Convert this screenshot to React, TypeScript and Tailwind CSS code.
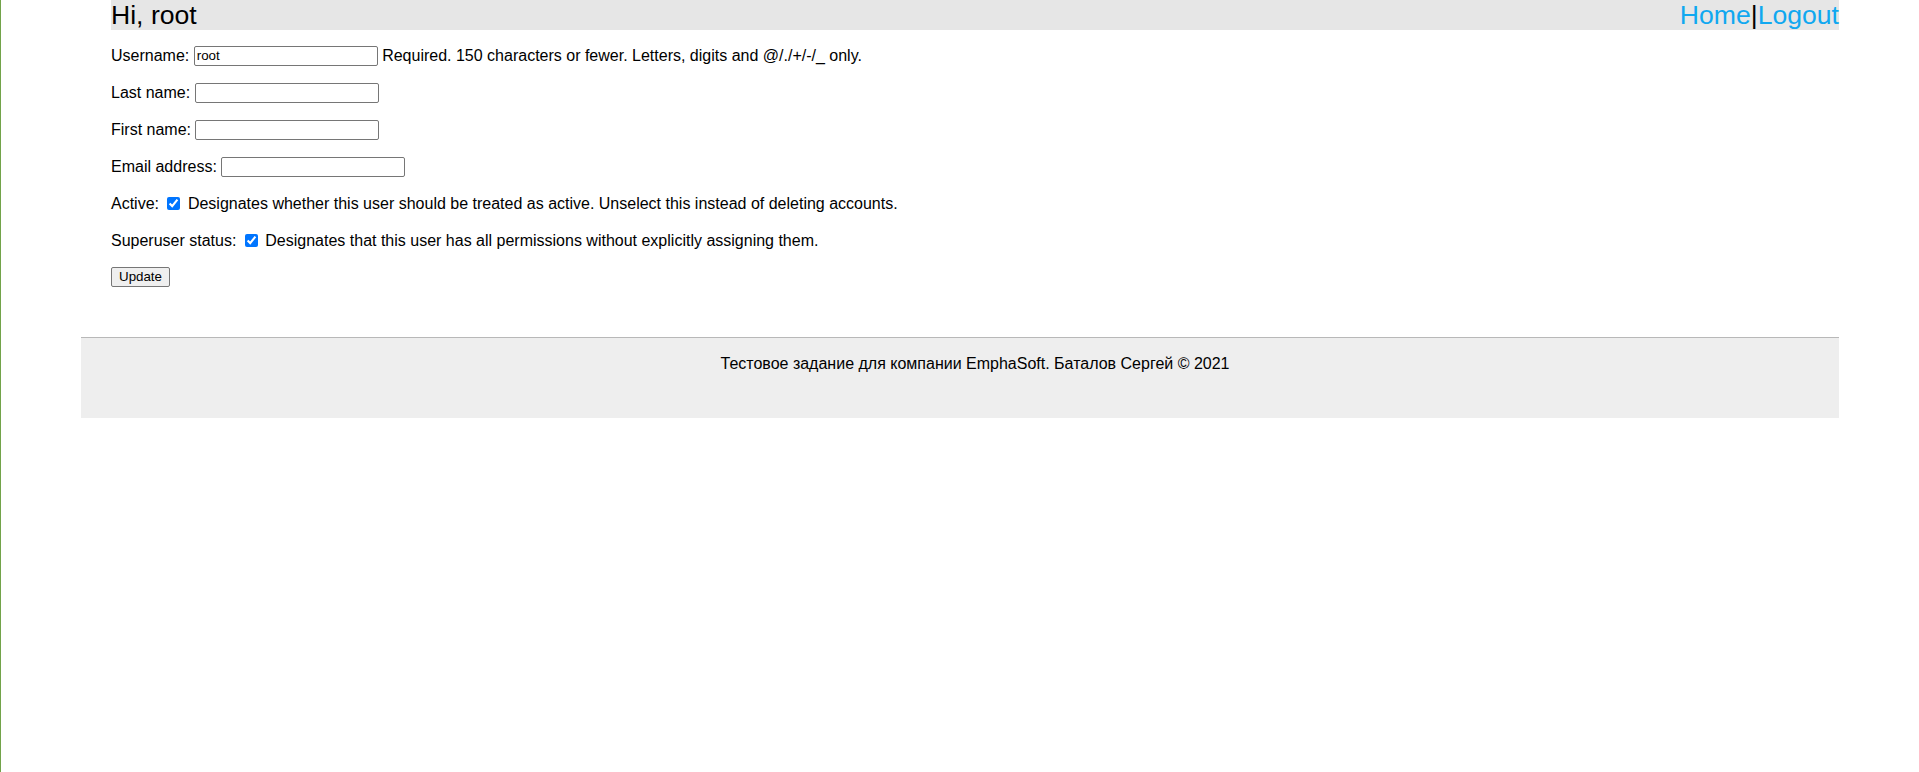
const FIELDS = [
  { label: "Username:", value: "root", help: "Required. 150 characters or fewer. Letters, digits and @/./+/-/_ only." },
  { label: "Last name:", value: "" },
  { label: "First name:", value: "" },
  { label: "Email address:", value: "" },
]

const FLAGS = [
  { label: "Active:", help: "Designates whether this user should be treated as active. Unselect this instead of deleting accounts." },
  { label: "Superuser status:", help: "Designates that this user has all permissions without explicitly assigning them." },
]

export default function App() {
  return (
    <div className="min-h-screen border-l border-[#72a34a] bg-white text-black font-['Liberation_Sans',Arial,sans-serif] text-[16px]">
      <div className="ml-[80px] w-[1758px]">
        <header className="ml-[30px] flex h-[30px] items-center justify-between bg-[#e6e6e6] text-[26.6px] leading-[30px]">
          <span>Hi, root</span>
          <nav className="flex">
            <a href="#" className="text-[#10a8f0]">Home</a>
            <span>|</span>
            <a href="#" className="text-[#10a8f0]">Logout</a>
          </nav>
        </header>

        <form className="ml-[30px] pt-[15px]" onSubmit={(e) => e.preventDefault()}>
          {FIELDS.map((f) => (
            <p key={f.label} className="mb-[16px] flex h-[21px] items-center">
              <label className="whitespace-pre">{f.label + " "}</label>
              <input
                type="text"
                defaultValue={f.value}
                className="h-[20px] w-[184px] rounded-[2px] border border-[#767676] bg-white px-[2px] text-[13.33px] outline-none"
              />
              {f.help && <span className="whitespace-pre">{" " + f.help}</span>}
            </p>
          ))}
          {FLAGS.map((f) => (
            <p key={f.label} className="mb-[16px] flex h-[21px] items-center">
              <label className="whitespace-pre">{f.label + " "}</label>
              <input type="checkbox" defaultChecked className="ml-[4px] mr-[3px] size-[13px]" />
              <span className="whitespace-pre">{" " + f.help}</span>
            </p>
          ))}
          <button
            type="submit"
            className="block h-[20px] rounded-[2px] border border-[#767676] bg-[#efefef] px-[7px] text-[13.33px] leading-[16px]"
          >
            Update
          </button>
        </form>

        <footer className="mt-[50px] h-[81px] border-t border-[#b8b8b8] bg-[#eeeeee] pl-[30px] pt-[14px] text-center">
          Тестовое задание для компании EmphaSoft. Баталов Сергей © 2021
        </footer>
      </div>
    </div>
  )
}
